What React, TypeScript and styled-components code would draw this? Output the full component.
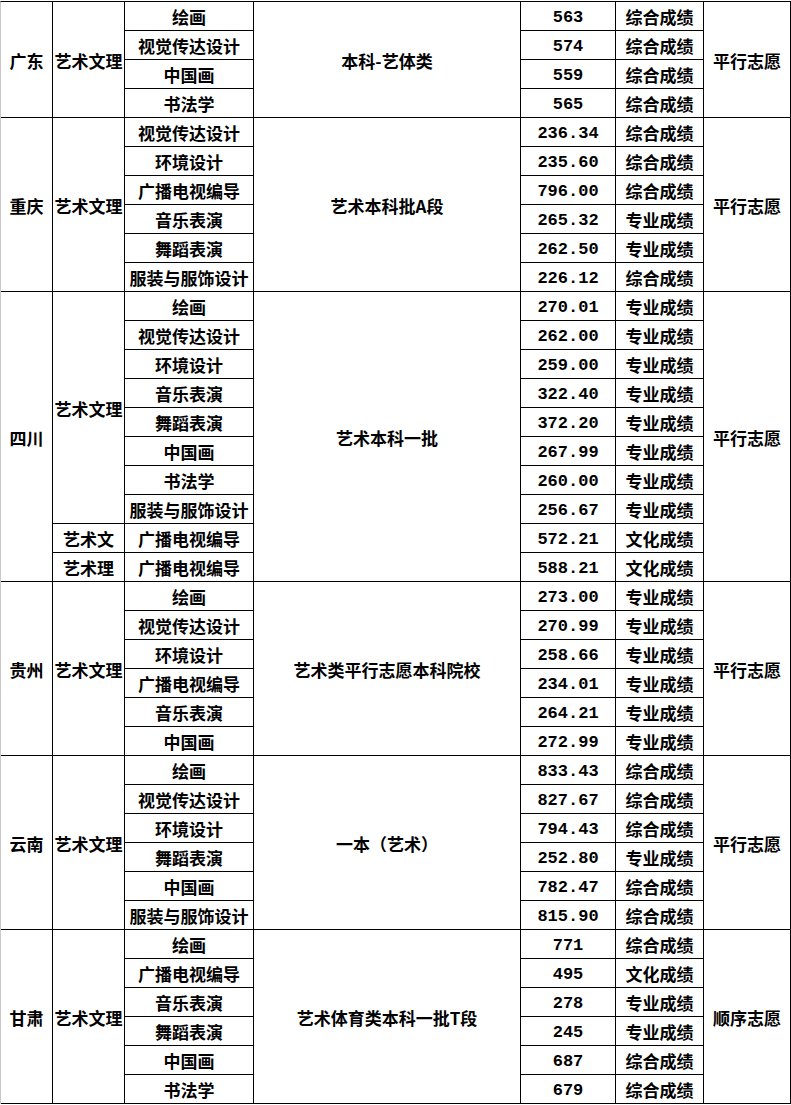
import React from 'react';
import styled, { createGlobalStyle } from 'styled-components';

const GlobalStyle = createGlobalStyle`
  html, body {
    margin: 0;
    padding: 0;
    background: #fff;
  }
  body {
    font-family: "Noto Sans CJK SC", "Noto Sans", sans-serif;
    color: #000;
  }
`;

const Table = styled.table`
  margin-top: 1px;
  width: 791px;
  table-layout: fixed;
  border-collapse: separate;
  border-spacing: 0;
  border-top: 1px solid #000;
  border-left: 1px solid #c8c8c8;
`;

const Row = styled.tr`
  height: 29px;
`;

const Cell = styled.td<{ $mono?: boolean }>`
  box-sizing: border-box;
  height: 29px;
  padding: ${({ $mono }) => ($mono ? '3px 0 0' : '1px 0 0')};
  border-right: 1px solid #000;
  border-bottom: 1px solid #000;
  text-align: center;
  vertical-align: middle;
  white-space: nowrap;
  overflow: hidden;
  font-family: ${({ $mono }) =>
    $mono ? '"Liberation Mono", "DejaVu Sans Mono", monospace' : '"Noto Sans CJK SC", "Noto Sans", sans-serif'};
  font-size: 17px;
  font-weight: bold;
  line-height: ${({ $mono }) => ($mono ? '25px' : '27px')};
`;

interface Item {
  major: string;
  score: string;
  type: string;
}

interface Track {
  name: string;
  items: Item[];
}

interface Group {
  province: string;
  batch: string;
  mode: string;
  tracks: Track[];
}

const z = '综合成绩';
const p = '专业成绩';
const w = '文化成绩';

const groups: Group[] = [
  {
    province: '广东',
    batch: '本科-艺体类',
    mode: '平行志愿',
    tracks: [
      {
        name: '艺术文理',
        items: [
          { major: '绘画', score: '563', type: z },
          { major: '视觉传达设计', score: '574', type: z },
          { major: '中国画', score: '559', type: z },
          { major: '书法学', score: '565', type: z },
        ],
      },
    ],
  },
  {
    province: '重庆',
    batch: '艺术本科批A段',
    mode: '平行志愿',
    tracks: [
      {
        name: '艺术文理',
        items: [
          { major: '视觉传达设计', score: '236.34', type: z },
          { major: '环境设计', score: '235.60', type: z },
          { major: '广播电视编导', score: '796.00', type: z },
          { major: '音乐表演', score: '265.32', type: p },
          { major: '舞蹈表演', score: '262.50', type: p },
          { major: '服装与服饰设计', score: '226.12', type: z },
        ],
      },
    ],
  },
  {
    province: '四川',
    batch: '艺术本科一批',
    mode: '平行志愿',
    tracks: [
      {
        name: '艺术文理',
        items: [
          { major: '绘画', score: '270.01', type: p },
          { major: '视觉传达设计', score: '262.00', type: p },
          { major: '环境设计', score: '259.00', type: p },
          { major: '音乐表演', score: '322.40', type: p },
          { major: '舞蹈表演', score: '372.20', type: p },
          { major: '中国画', score: '267.99', type: p },
          { major: '书法学', score: '260.00', type: p },
          { major: '服装与服饰设计', score: '256.67', type: p },
        ],
      },
      { name: '艺术文', items: [{ major: '广播电视编导', score: '572.21', type: w }] },
      { name: '艺术理', items: [{ major: '广播电视编导', score: '588.21', type: w }] },
    ],
  },
  {
    province: '贵州',
    batch: '艺术类平行志愿本科院校',
    mode: '平行志愿',
    tracks: [
      {
        name: '艺术文理',
        items: [
          { major: '绘画', score: '273.00', type: p },
          { major: '视觉传达设计', score: '270.99', type: p },
          { major: '环境设计', score: '258.66', type: p },
          { major: '广播电视编导', score: '234.01', type: p },
          { major: '音乐表演', score: '264.21', type: p },
          { major: '中国画', score: '272.99', type: p },
        ],
      },
    ],
  },
  {
    province: '云南',
    batch: '一本（艺术）',
    mode: '平行志愿',
    tracks: [
      {
        name: '艺术文理',
        items: [
          { major: '绘画', score: '833.43', type: z },
          { major: '视觉传达设计', score: '827.67', type: z },
          { major: '环境设计', score: '794.43', type: z },
          { major: '舞蹈表演', score: '252.80', type: p },
          { major: '中国画', score: '782.47', type: z },
          { major: '服装与服饰设计', score: '815.90', type: z },
        ],
      },
    ],
  },
  {
    province: '甘肃',
    batch: '艺术体育类本科一批T段',
    mode: '顺序志愿',
    tracks: [
      {
        name: '艺术文理',
        items: [
          { major: '绘画', score: '771', type: z },
          { major: '广播电视编导', score: '495', type: w },
          { major: '音乐表演', score: '278', type: p },
          { major: '舞蹈表演', score: '245', type: p },
          { major: '中国画', score: '687', type: z },
          { major: '书法学', score: '679', type: z },
        ],
      },
    ],
  },
];

const widths = [52, 72, 129, 267, 95, 88, 87];

export default function App() {
  const rows: React.ReactNode[] = [];

  groups.forEach((g, gi) => {
    const total = g.tracks.reduce((n, t) => n + t.items.length, 0);
    let first = true;
    g.tracks.forEach((t, ti) => {
      t.items.forEach((it, ii) => {
        rows.push(
          <Row key={`${gi}-${ti}-${ii}`}>
            {first && <Cell rowSpan={total}>{g.province}</Cell>}
            {ii === 0 && <Cell rowSpan={t.items.length}>{t.name}</Cell>}
            <Cell>{it.major}</Cell>
            {first && <Cell rowSpan={total}>{g.batch}</Cell>}
            <Cell $mono>{it.score}</Cell>
            <Cell>{it.type}</Cell>
            {first && <Cell rowSpan={total}>{g.mode}</Cell>}
          </Row>
        );
        first = false;
      });
    });
  });

  return (
    <>
      <GlobalStyle />
      <Table>
        <colgroup>
          {widths.map((wd, i) => (
            <col key={i} style={{ width: wd }} />
          ))}
        </colgroup>
        <tbody>{rows}</tbody>
      </Table>
    </>
  );
}
